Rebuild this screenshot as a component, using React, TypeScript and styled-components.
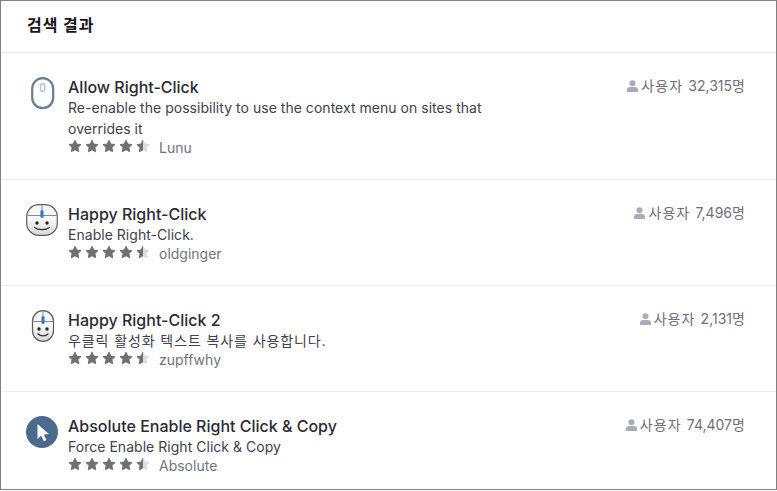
import styled, { createGlobalStyle } from "styled-components";

const GlobalStyle = createGlobalStyle`
    html, body {
        margin: 0;
        padding: 0;
        background: #fff;
    }
    body {
        font-family: Inter, "Noto Sans CJK KR", sans-serif;
    }
`;

const Wrapper = styled.div`
    width: 777px;
    height: 490px;
    box-sizing: border-box;
    border: 1px solid #808080;
    overflow: hidden;
    background: #fff;
`;

const Header = styled.h1`
    margin: 0;
    height: 52px;
    box-sizing: border-box;
    padding: 13px 26px 0;
    font-size: 16px;
    line-height: 21px;
    font-weight: 700;
    letter-spacing: 1px;
    color: #15141a;
    border-bottom: 1px solid #e8e8ec;
    font-family: "Noto Sans CJK KR", sans-serif;
`;

const Row = styled.div`
    display: flex;
    align-items: flex-start;
    height: ${(p: { $h: number }) => p.$h}px;
    box-sizing: border-box;
    padding: 22px 30px 0 25px;
    border-bottom: 1px solid #eeeef0;
    &:last-child {
        border-bottom: none;
    }
`;

const IconBox = styled.div`
    width: 32px;
    height: 32px;
    margin-top: 2px;
    margin-right: 10px;
    flex-shrink: 0;
    svg {
        display: block;
    }
`;

const Body = styled.div`
    flex: 1;
    min-width: 0;
`;

const Title = styled.div`
    padding-top: 2px;
    font-size: 16px;
    line-height: 20px;
    font-weight: 500;
    color: #2b2a33;
`;

const Desc = styled.div`
    max-width: 430px;
    font-size: 14px;
    line-height: 21px;
    letter-spacing: 0.03px;
    color: #42414d;
`;

const Kor = styled.span<{ $spacing: number }>`
    letter-spacing: ${p => p.$spacing}px;
`;

const Meta = styled.div`
    display: flex;
    align-items: center;
    height: 15px;
`;

const Stars = styled.div`
    display: flex;
    gap: 3px;
    margin-top: -1px;
    svg {
        display: block;
    }
`;

const Author = styled.span`
    margin-left: 9px;
    margin-top: 3px;
    font-size: 14px;
    line-height: 18px;
    color: #73737e;
`;

const Users = styled.div`
    display: flex;
    align-items: center;
    gap: 3px;
    font-size: 14px;
    line-height: 21px;
    color: #6f6f7a;
    white-space: pre;
`;

// fat five point star, tips rounded by the stroke it is drawn with
const STAR = "M7 1.2l1.8 3.9 4.2.5-3.1 2.9.8 4.2L7 10.7l-3.7 2 .8-4.2L1 5.6l4.2-.5z";

function Rating() {
    return (
        <Stars>
            {[0, 1, 2, 3, 4].map(i => (
                <svg key={i} width="14" height="14" viewBox="0 0 14 14">
                    {i === 4 && <path d={STAR} fill="#dcdcdc" stroke="#dcdcdc" strokeWidth="1" strokeLinejoin="round" />}
                    <path
                        d={STAR}
                        fill="#707070"
                        stroke="#707070"
                        strokeWidth="1"
                        strokeLinejoin="round"
                        clipPath={i === 4 ? "url(#half)" : undefined}
                    />
                </svg>
            ))}
            <svg width="0" height="0" style={{ position: "absolute" }}>
                <clipPath id="half"><rect x="0" y="0" width="7" height="14" /></clipPath>
            </svg>
        </Stars>
    );
}

function UserIcon() {
    return (
        <svg width="11" height="12" viewBox="0 0 11 12" fill="#a6adb8">
            <circle cx="5.5" cy="3.2" r="3" />
            <path d="M0 12V9.6C0 7.9 1.6 7 3 7h5c1.4 0 3 .9 3 2.6V12z" />
        </svg>
    );
}

function PlainMouse() {
    return (
        <svg width="32" height="32" viewBox="0 0 32 32">
            <rect x="6.2" y="1.2" width="21" height="30" rx="10.5" fill="#fff" stroke="#677f92" strokeWidth="2.2" />
            <rect x="14.6" y="6.5" width="4" height="8" rx="2" fill="#fff" stroke="#b9c6d0" strokeWidth="1.6" />
        </svg>
    );
}

function FaceMouse({ narrow }: { narrow?: boolean }) {
    const x = narrow ? 6.5 : 0.7;
    const w = narrow ? 21 : 30.6;
    const cx = x + w / 2;
    const eye = narrow ? 4 : 5;
    const gradId = narrow ? "faceNarrow" : "faceWide";
    return (
        <svg width="32" height="32" viewBox="0 0 32 32">
            <defs>
                <linearGradient id={gradId} x1="0" y1="0" x2="0" y2="1">
                    <stop offset="0" stopColor="#f4f4f4" />
                    <stop offset="0.45" stopColor="#fafafa" />
                    <stop offset="1" stopColor="#d6d6d6" />
                </linearGradient>
            </defs>
            <rect x={x} y="0.7" width={w} height="30.6" rx={narrow ? 10.5 : 12} fill={`url(#${gradId})`} stroke="#5c5c5c" strokeWidth="1.2" />
            <path d={`M${x} 11.5H${x + w}M${cx} 1V11`} stroke="#8a8a8a" strokeWidth="1" fill="none" />
            <rect x={cx - 1.6} y="6" width="3.2" height="8" rx="1.6" fill="#2f7fd0" />
            <circle cx={cx - eye} cy="19" r="1.7" fill="#222" />
            <circle cx={cx + eye} cy="19" r="1.7" fill="#222" />
            <path d={narrow ? `M${cx - 5} 24c2.5 2.4 7.5 2.4 10 0` : `M${cx - 7.5} 23.5c3.5 2.8 11.5 2.8 15 0`} stroke="#333" strokeWidth="1.3" fill="none" strokeLinecap="round" />
        </svg>
    );
}

function CursorBadge() {
    return (
        <svg width="32" height="32" viewBox="0 0 32 32">
            <circle cx="16" cy="16" r="16" fill="#4c6a8c" />
            <path d="M11.5 8v15l3.7-3.4 2.6 5.6 2.6-1.2-2.6-5.5 5-.4z" fill="#fff" />
        </svg>
    );
}

const items = [
    { h: 127, icon: <PlainMouse />, title: "Allow Right-Click", desc: "Re-enable the possibility to use the context menu on sites that overrides it", author: "Lunu", count: "32,315" },
    { h: 106, icon: <FaceMouse />, title: "Happy Right-Click", desc: "Enable Right-Click.", author: "oldginger", count: "7,496" },
    { h: 106, icon: <FaceMouse narrow />, title: "Happy Right-Click 2", desc: <Kor $spacing={0.9}>우클릭 활성화 텍스트 복사를 사용합니다.</Kor>, author: "zupffwhy", count: "2,131" },
    { h: 97, icon: <CursorBadge />, title: "Absolute Enable Right Click & Copy", desc: "Force Enable Right Click & Copy", author: "Absolute", count: "74,407" },
];

export default function App() {
    return (
        <Wrapper>
            <GlobalStyle />
            <Header>검색 결과</Header>
            {items.map(item => (
                <Row key={item.title} $h={item.h}>
                    <IconBox>{item.icon}</IconBox>
                    <Body>
                        <Title>{item.title}</Title>
                        <Desc>{item.desc}</Desc>
                        <Meta>
                            <Rating />
                            <Author>{item.author}</Author>
                        </Meta>
                    </Body>
                    <Users>
                        <UserIcon />
                        <span><Kor $spacing={1.1}>사용자 </Kor>{item.count}<Kor $spacing={1.1}>명</Kor></span>
                    </Users>
                </Row>
            ))}
        </Wrapper>
    );
}
